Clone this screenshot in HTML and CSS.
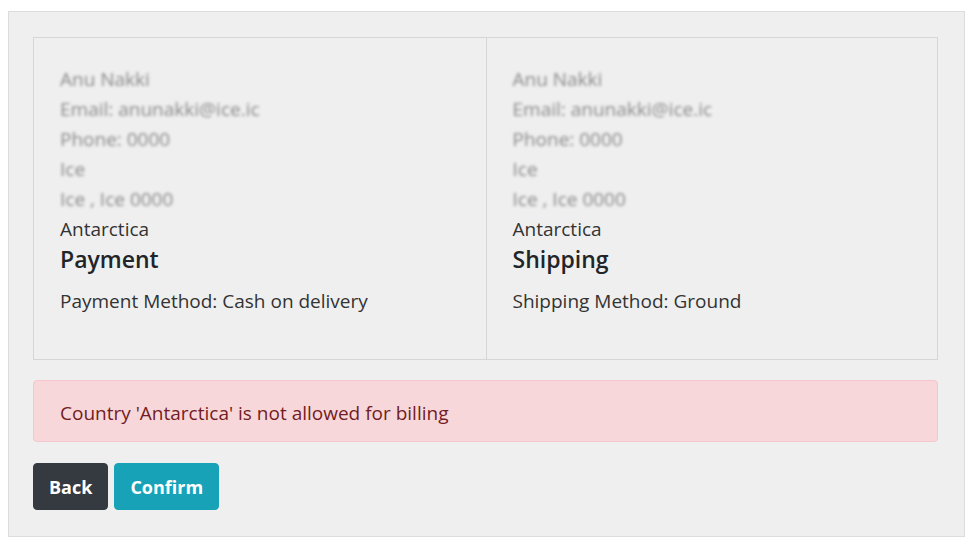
FILE: index.html
```html
<!DOCTYPE html>
<html>
<head>
<meta charset="utf-8">
<link rel="stylesheet" href="styles.css">
</head>
<body>
<div class="panel">
  <div class="summary">
    <div class="cell">
      <div class="blur">Anu Nakki</div>
      <div class="blur">Email: anunakki@ice.ic</div>
      <div class="blur">Phone: 0000</div>
      <div class="blur">Ice</div>
      <div class="blur">Ice , Ice 0000</div>
      <div class="line">Antarctica</div>
      <h3 class="title">Payment</h3>
      <p class="method">Payment Method: Cash on delivery</p>
    </div>
    <div class="cell">
      <div class="blur">Anu Nakki</div>
      <div class="blur">Email: anunakki@ice.ic</div>
      <div class="blur">Phone: 0000</div>
      <div class="blur">Ice</div>
      <div class="blur">Ice , Ice 0000</div>
      <div class="line">Antarctica</div>
      <h3 class="title">Shipping</h3>
      <p class="method">Shipping Method: Ground</p>
    </div>
  </div>
  <div class="alert">Country 'Antarctica' is not allowed for billing</div>
  <div class="actions">
    <button class="btn btn-dark">Back</button>
    <button class="btn btn-info">Confirm</button>
  </div>
</div>
</body>
</html>
```
FILE: styles.css
```css
html, body {
  margin: 0;
  background: #ffffff;
}
body {
  padding: 11px 9px 8px 8px;
  font-family: "Open Sans", "Noto Sans", sans-serif;
  font-size: 19px;
  color: #212529;
}
.panel {
  background: #efefef;
  border: 1px solid #dcdcdc;
  padding: 25px 26px 26px 24px;
  height: 473px;
}
.summary {
  display: grid;
  grid-template-columns: 1fr 1fr;
  border: 1px solid #d6d6d6;
}
.cell {
  padding: 26px 26px 27px 26px;
  line-height: 30px;
}
.cell + .cell {
  border-left: 1px solid #d6d6d6;
}
.blur {
  color: #8a8a8a;
  filter: blur(1.4px);
}
.line {
  color: #333;
}
.title {
  margin: 0 0 12px 0;
  font-size: 23px;
  font-weight: 600;
  line-height: 30px;
  color: #212529;
}
.method {
  margin: 0 0 16px 0;
  color: #333;
}
.alert {
  margin-top: 20px;
  background: #f8d7da;
  border: 1px solid #f5c6cb;
  border-radius: 4px;
  color: #721c24;
  padding: 17px 26px 13px 26px;
  line-height: 30px;
}
.actions {
  margin-top: 21px;
  display: flex;
  gap: 6px;
}
.btn {
  height: 47px;
  border: 1px solid transparent;
  border-radius: 4px;
  padding: 0 15px;
  font-family: "Open Sans", "Noto Sans", sans-serif;
  font-size: 18px;
  font-weight: 700;
  color: #fff;
}
.btn-dark {
  background: #343a40;
  border-color: #343a40;
}
.btn-info {
  background: #17a2b8;
  border-color: #17a2b8;
}
```
